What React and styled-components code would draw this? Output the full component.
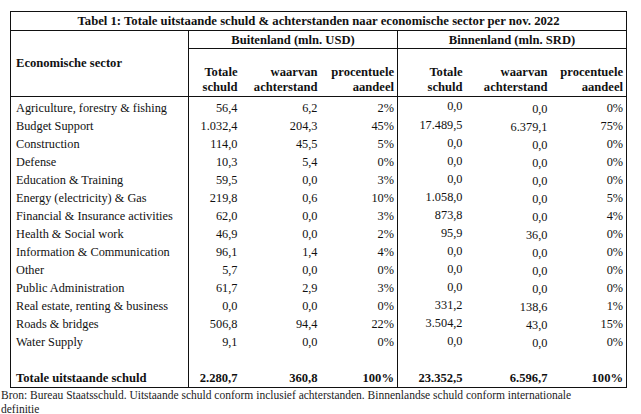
import React from 'react';
import styled, { createGlobalStyle } from 'styled-components';

const GlobalStyle = createGlobalStyle`
    *, *::before, *::after {
        box-sizing: border-box;
    }
    body {
        margin: 0;
        background: #fff;
        color: #111;
        font-family: "Liberation Serif", "Times New Roman", serif;
    }
`

const serif = `"Liberation Serif", "Times New Roman", serif`

const rows = [
    ['Agriculture, forestry & fishing', '56,4', '6,2', '2%', '0,0', '0,0', '0%'],
    ['Budget Support', '1.032,4', '204,3', '45%', '17.489,5', '6.379,1', '75%'],
    ['Construction', '114,0', '45,5', '5%', '0,0', '0,0', '0%'],
    ['Defense', '10,3', '5,4', '0%', '0,0', '0,0', '0%'],
    ['Education & Training', '59,5', '0,0', '3%', '0,0', '0,0', '0%'],
    ['Energy (electricity) & Gas', '219,8', '0,6', '10%', '1.058,0', '0,0', '5%'],
    ['Financial & Insurance activities', '62,0', '0,0', '3%', '873,8', '0,0', '4%'],
    ['Health & Social work', '46,9', '0,0', '2%', '95,9', '36,0', '0%'],
    ['Information & Communication', '96,1', '1,4', '4%', '0,0', '0,0', '0%'],
    ['Other', '5,7', '0,0', '0%', '0,0', '0,0', '0%'],
    ['Public Administration', '61,7', '2,9', '3%', '0,0', '0,0', '0%'],
    ['Real estate, renting & business', '0,0', '0,0', '0%', '331,2', '138,6', '1%'],
    ['Roads & bridges', '506,8', '94,4', '22%', '3.504,2', '43,0', '15%'],
    ['Water Supply', '9,1', '0,0', '0%', '0,0', '0,0', '0%'],
]

const totals = ['2.280,7', '360,8', '100%', '23.352,5', '6.596,7', '100%']

const App = () => {
    return (
        <>
            <GlobalStyle />
            <Page>
                <Table>
                    <colgroup>
                        <col style={{ width: 178 }} />
                        <col style={{ width: 52 }} />
                        <col style={{ width: 80 }} />
                        <col style={{ width: 77 }} />
                        <col style={{ width: 68 }} />
                        <col style={{ width: 85 }} />
                        <col style={{ width: 76 }} />
                    </colgroup>
                    <thead>
                        <tr>
                            <TitleCell colSpan={7}>
                                Tabel 1: Totale uitstaande schuld &amp; achterstanden naar economische sector per nov. 2022
                            </TitleCell>
                        </tr>
                        <tr>
                            <SectorHead rowSpan={2}>Economische sector</SectorHead>
                            <GroupHead colSpan={3}>Buitenland (mln. USD)</GroupHead>
                            <GroupHead colSpan={3}>Binnenland (mln. SRD)</GroupHead>
                        </tr>
                        <tr>
                            <SubHead>Totale<br />schuld</SubHead>
                            <SubHead>waarvan<br />achterstand</SubHead>
                            <SubHead $divider>procentuele<br />aandeel</SubHead>
                            <SubHead>Totale<br />schuld</SubHead>
                            <SubHead>waarvan<br />achterstand</SubHead>
                            <SubHead>procentuele<br />aandeel</SubHead>
                        </tr>
                    </thead>
                    <tbody>
                        {rows.map((r, i) => (
                            <Row key={r[0]} $first={i === 0}>
                                <Label>{r[0]}</Label>
                                <Num>{r[1]}</Num>
                                <Num>{r[2]}</Num>
                                <Num $divider>{r[3]}</Num>
                                <Num $shift="raise">{r[4]}</Num>
                                <Num $shift="drop">{r[5]}</Num>
                                <Num>{r[6]}</Num>
                            </Row>
                        ))}
                        <Row>
                            <Label>&nbsp;</Label>
                            <Num />
                            <Num />
                            <Num $divider />
                            <Num />
                            <Num />
                            <Num />
                        </Row>
                        <TotalRow>
                            <Label>Totale uitstaande schuld</Label>
                            <Num>{totals[0]}</Num>
                            <Num>{totals[1]}</Num>
                            <Num $divider>{totals[2]}</Num>
                            <Num>{totals[3]}</Num>
                            <Num>{totals[4]}</Num>
                            <Num>{totals[5]}</Num>
                        </TotalRow>
                    </tbody>
                </Table>
                <Source>
                    Bron: Bureau Staatsschuld. Uitstaande schuld conform inclusief achterstanden. Binnenlandse schuld conform internationale definitie
                </Source>
            </Page>
        </>
    )
}

const Page = styled.div`
    width: 641px;
    padding-top: 11px;
    font-family: ${serif};
`

const Table = styled.table`
    margin-left: 10px;
    width: 617px;
    table-layout: fixed;
    border-collapse: collapse;
    border: 1px solid #111;
    font-family: ${serif};
    font-size: 12.3px;
    line-height: 15px;
    color: #111;
`

const TitleCell = styled.th`
    height: 19px;
    padding: 2px 0 0;
    text-align: center;
    vertical-align: top;
    font-size: 12.7px;
    font-weight: bold;
    border-bottom: 1px solid #111;
    white-space: nowrap;
`

const SectorHead = styled.th`
    text-align: left;
    vertical-align: top;
    padding: 25px 0 0 5px;
    font-size: 12.6px;
    font-weight: bold;
    border-right: 1px solid #111;
    border-bottom: 1px solid #111;
`

const GroupHead = styled.th`
    height: 18px;
    padding: 2px 0 0;
    text-align: center;
    vertical-align: top;
    font-size: 12.6px;
    font-weight: bold;
    border-bottom: 1px solid #111;
    border-left: 1px solid #111;
`

const SubHead = styled.th`
    height: 48px;
    padding: 0 3px 1px 0;
    text-align: right;
    vertical-align: bottom;
    font-size: 12.6px;
    font-weight: bold;
    border-bottom: 1px solid #111;
    border-right: ${p => (p.$divider ? '1px solid #111' : 'none')};
    white-space: nowrap;
`

const Row = styled.tr`
    & > td {
        height: ${p => (p.$first ? '21px' : '18px')};
        vertical-align: top;
        padding-top: ${p => (p.$first ? '4px' : '1px')};
    }
    & > td[data-shift='raise'] {
        padding-top: ${p => (p.$first ? '2px' : '0')};
    }
    & > td[data-shift='drop'] {
        padding-top: ${p => (p.$first ? '5px' : '2px')};
    }
`

const TotalRow = styled.tr`
    & > td {
        height: 16px;
        vertical-align: top;
        padding-top: 1px;
        font-size: 12.6px;
        font-weight: bold;
    }
`

const Label = styled.td`
    padding-left: 5px;
    text-align: left;
    white-space: nowrap;
    border-right: 1px solid #111;
`

const Num = styled.td.attrs(p => ({ 'data-shift': p.$shift }))`
    padding-right: 3px;
    text-align: right;
    white-space: nowrap;
    border-right: ${p => (p.$divider ? '1px solid #111' : 'none')};
`

const Source = styled.div`
    margin-left: 1px;
    width: 600px;
    font-family: ${serif};
    font-size: 11.5px;
    line-height: 14px;
    color: #222;
`

export default App;
